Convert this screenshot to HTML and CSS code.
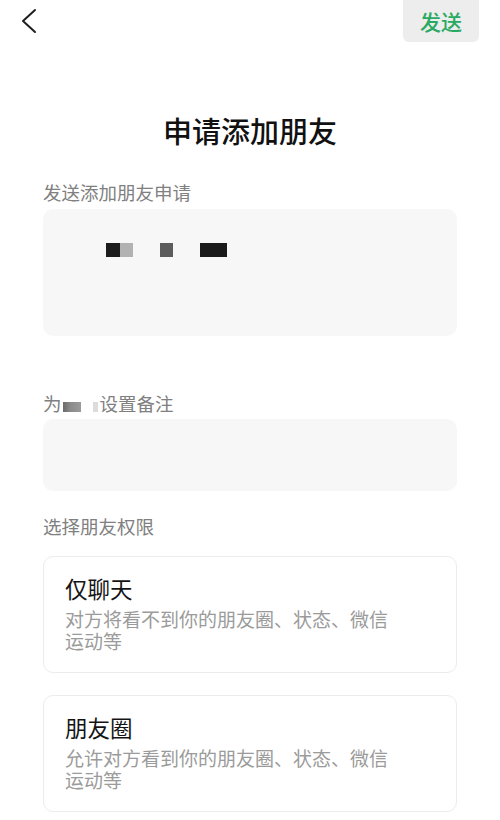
FILE: index.html
```html
<!DOCTYPE html>
<html lang="zh-CN">
<head>
<meta charset="utf-8">
<title>申请添加朋友</title>
<link rel="stylesheet" href="styles.css">
</head>
<body>
<header class="topbar">
  <div class="back">
    <svg width="16" height="26" viewBox="0 0 16 26"><polyline points="14,2 2,13 14,24" fill="none" stroke="#1e1e1e" stroke-width="2" stroke-linecap="round" stroke-linejoin="round"/></svg>
  </div>
  <div class="send">发送</div>
</header>
<main class="content">
  <h1 class="title">申请添加朋友</h1>
  <div class="label first">发送添加朋友申请</div>
  <div class="field big">
    <span class="blk blk-a"></span><span class="blk blk-b"></span><span class="blk blk-c"></span><span class="blk blk-d"></span>
  </div>
  <div class="label second">为<span class="mask mask-dark"></span><span class="mask mask-light"></span>设置备注</div>
  <div class="field small"></div>
  <div class="label third">选择朋友权限</div>
  <div class="option">
    <div class="opt-title">仅聊天</div>
    <div class="opt-desc">对方将看不到你的朋友圈、状态、微信运动等</div>
  </div>
  <div class="option second-opt">
    <div class="opt-title">朋友圈</div>
    <div class="opt-desc">允许对方看到你的朋友圈、状态、微信运动等</div>
  </div>
</main>
</body>
</html>
```
FILE: styles.css
```css
html, body {
  margin: 0;
  padding: 0;
  background: #ffffff;
  font-family: "Noto Sans CJK SC", "Noto Sans", sans-serif;
}

.topbar {
  height: 42px;
  display: flex;
  justify-content: space-between;
  align-items: flex-start;
}

.back {
  margin-left: 21px;
  margin-top: 8px;
  width: 16px;
  height: 26px;
}

.back svg {
  display: block;
}

.send {
  width: 76px;
  height: 42px;
  margin-right: 21px;
  background: #ededed;
  border-radius: 0 0 6px 6px;
  color: #28aa62;
  font-size: 21px;
  font-weight: 500;
  line-height: 42px;
  text-align: center;
}

.content {
  padding: 0 43px;
  display: flex;
  flex-direction: column;
}

.title {
  margin: 68px 0 0;
  font-size: 29px;
  line-height: 40px;
  font-weight: 500;
  color: #111111;
  text-align: center;
}

.label {
  font-size: 18.5px;
  line-height: 26px;
  color: #808080;
  display: flex;
  align-items: center;
}

.label.first { margin-top: 29px; }
.label.second { margin-top: 54px; }
.label.third { margin-top: 22px; }

.field {
  background: #f7f7f7;
  border-radius: 10px;
}

.field.big {
  margin-top: 4px;
  height: 127px;
  box-sizing: border-box;
  padding: 34px 0 0 63px;
  display: flex;
  align-items: flex-start;
}

.field.small {
  margin-top: 3px;
  height: 72px;
}

.blk {
  display: block;
  height: 14px;
}

.blk-a { width: 14px; background: #1c1c1c; }
.blk-b { width: 13px; background: #b2b2b2; }
.blk-c { width: 13px; background: #5c5c5c; margin-left: 27px; }
.blk-d { width: 27px; background: #1a1a1a; margin-left: 27px; }

.mask {
  display: inline-block;
  height: 10px;
  align-self: flex-end;
  margin-bottom: 4px;
}

.mask-dark {
  width: 18px;
  margin-left: 1px;
  background: linear-gradient(to right, #6a6a6a, #8a8a8a 40%, #9a9a9a);
}

.mask-light {
  width: 5px;
  margin-left: 12px;
  margin-right: 2px;
  background: #dcdcdc;
}

.option {
  margin-top: 17px;
  height: 117px;
  box-sizing: border-box;
  border: 1px solid #ececec;
  border-radius: 10px;
  padding: 16px 21px 0;
}

.option.second-opt {
  margin-top: 22px;
}

.opt-title {
  font-size: 22.5px;
  line-height: 30px;
  color: #141414;
}

.opt-desc {
  margin-top: 5px;
  font-size: 19px;
  line-height: 21.5px;
  color: #9b9b9b;
  max-width: 17.5em;
}
```
